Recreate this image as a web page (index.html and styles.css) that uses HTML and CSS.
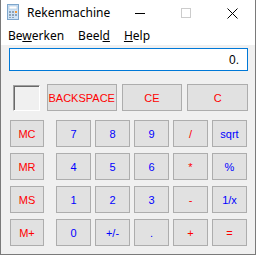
FILE: index.html
```html
<!DOCTYPE html>
<html lang="nl">
<head>
    <meta charset="UTF-8">
    <meta name="viewport" content="width=device-width, initial-scale=1.0">
    <title>Rekenmachine</title>
    <link rel="stylesheet" href="styles.css">
</head>
<body>
    <div class="window">
        <div class="titlebar">
            <svg class="icon" width="16" height="16" viewBox="0 0 16 16">
                <rect x="2.5" y="0.5" width="11" height="15" fill="#cfe4f7" stroke="#7ea6cc"/>
                <rect x="4" y="2" width="8" height="3" fill="#ffffff" stroke="#9bb8d4" stroke-width="0.5"/>
                <rect x="4" y="7" width="2" height="2" fill="#8da3b8"/>
                <rect x="7" y="7" width="2" height="2" fill="#8da3b8"/>
                <rect x="10" y="7" width="2" height="2" fill="#f29a3a"/>
                <rect x="4" y="10" width="2" height="2" fill="#8da3b8"/>
                <rect x="7" y="10" width="2" height="2" fill="#8da3b8"/>
                <rect x="10" y="10" width="2" height="2" fill="#8da3b8"/>
                <rect x="4" y="13" width="2" height="1" fill="#8da3b8"/>
                <rect x="7" y="13" width="2" height="1" fill="#8da3b8"/>
            </svg>
            <span class="title">Rekenmachine</span>
            <div class="controls">
                <div class="ctrl">
                    <svg width="10" height="10" viewBox="0 0 10 10"><path d="M0 5.5H10" stroke="#000" stroke-width="1"/></svg>
                </div>
                <div class="ctrl">
                    <svg width="10" height="10" viewBox="0 0 10 10"><rect x="0.5" y="0.5" width="9" height="9" fill="none" stroke="#cccccc"/></svg>
                </div>
                <div class="ctrl">
                    <svg width="11" height="11" viewBox="0 0 11 11"><path d="M0.5 0.5L10.5 10.5M10.5 0.5L0.5 10.5" stroke="#000" stroke-width="1"/></svg>
                </div>
            </div>
        </div>

        <div class="menubar">
            <span class="menu">Be<u>w</u>erken</span>
            <span class="menu">Beel<u>d</u></span>
            <span class="menu"><u>H</u>elp</span>
        </div>

        <div class="client">
            <div class="display">0.</div>

            <div class="toprow">
                <div class="memflag"></div>
                <button class="key red wide">BACKSPACE</button>
                <button class="key red mid">CE</button>
                <button class="key red mid">C</button>
            </div>

            <div class="pad">
                <div class="mem">
                    <button class="key red">MC</button>
                    <button class="key red">MR</button>
                    <button class="key red">MS</button>
                    <button class="key red">M+</button>
                </div>
                <div class="grid">
                    <button class="key blue">7</button>
                    <button class="key blue">8</button>
                    <button class="key blue">9</button>
                    <button class="key red">/</button>
                    <button class="key blue">sqrt</button>

                    <button class="key blue">4</button>
                    <button class="key blue">5</button>
                    <button class="key blue">6</button>
                    <button class="key red">*</button>
                    <button class="key blue">%</button>

                    <button class="key blue">1</button>
                    <button class="key blue">2</button>
                    <button class="key blue">3</button>
                    <button class="key red">-</button>
                    <button class="key blue">1/x</button>

                    <button class="key blue">0</button>
                    <button class="key blue">+/-</button>
                    <button class="key blue">.</button>
                    <button class="key red">+</button>
                    <button class="key red">=</button>
                </div>
            </div>
        </div>
    </div>
</body>
</html>
```

FILE: styles.css
```css
* {
    padding: 0;
    margin: 0;
    box-sizing: border-box;
}

body {
    background-color: #fff;
}

.window {
    width: 256px;
    height: 255px;
    border: 1px solid #7a7a7a;
    border-top: none;
    background-color: #f0f0f0;
    display: flex;
    flex-direction: column;
}

/* title bar */
.titlebar {
    height: 26px;
    background-color: #fff;
    display: flex;
    align-items: center;
}

.icon {
    margin-left: 4px;
    margin-top: -2px;
}

.title {
    margin-left: 6px;
    font-family: "Noto Sans", sans-serif;
    font-size: 12px;
    color: #000;
    margin-top: -1px;
}

.controls {
    margin-left: auto;
    display: flex;
    height: 100%;
}

.ctrl {
    width: 46px;
    height: 100%;
    display: flex;
    align-items: center;
    justify-content: center;
}

/* menu */
.menubar {
    height: 19px;
    background-color: #fff;
    display: flex;
    align-items: center;
    font-family: "Noto Sans", sans-serif;
    font-size: 12px;
    color: #000;
}

.menu {
    padding: 0 7px;
}

/* client area */
.client {
    flex: 1;
    padding: 3px 7px 0 8px;
}

.display {
    height: 23px;
    width: 239px;
    background-color: #fff;
    border: 1px solid #0078d7;
    font-family: "Liberation Sans", sans-serif;
    font-size: 12px;
    color: #000;
    text-align: right;
    padding: 4px 8px 0 0;
}

.key {
    font-family: "Liberation Sans", sans-serif;
    font-size: 11px;
    background-color: #e1e1e1;
    border: 1px solid #adadad;
    height: 27px;
    width: 35px;
}

.red {
    color: #ff0000;
}

.blue {
    color: #0000ff;
}

.toprow {
    display: flex;
    align-items: center;
    margin-top: 13px;
}

.memflag {
    width: 27px;
    height: 26px;
    margin-left: 4px;
    margin-right: 7px;
    border-top: 1px solid #a0a0a0;
    border-left: 1px solid #a0a0a0;
    border-right: 1px solid #fff;
    border-bottom: 1px solid #fff;
    box-shadow: inset 1px 1px 0 #696969;
}

.wide {
    width: 70px;
    margin-right: 4px;
}

.mid {
    width: 61px;
    margin-left: 1px;
}

.mid + .mid {
    margin-left: 5px;
}

.pad {
    display: flex;
    margin-top: 9px;
    margin-left: 1px;
}

.mem {
    display: flex;
    flex-direction: column;
    gap: 6px;
    margin-right: 12px;
}

.mem .key {
    width: 34px;
}

.grid {
    display: grid;
    grid-template-columns: repeat(5, 35px);
    column-gap: 4px;
    row-gap: 6px;
}
```
